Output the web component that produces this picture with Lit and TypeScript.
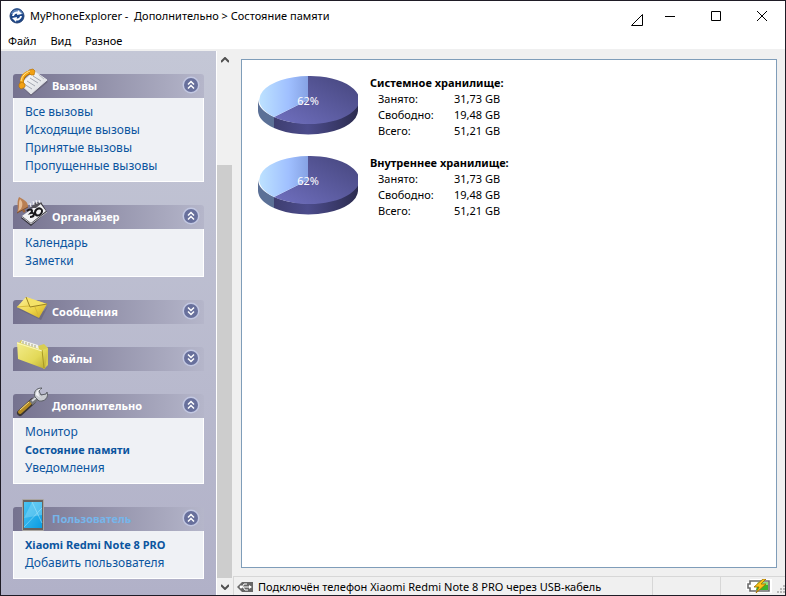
import { LitElement, html, svg, css, nothing, type TemplateResult } from "lit";
import { customElement, property, state } from "lit/decorators.js";
import { classMap } from "lit/directives/class-map.js";

interface Entry {
  label: string;
  active?: boolean;
}

interface Group {
  title: string;
  icon: TemplateResult;
  open: boolean;
  user?: boolean;
  entries: Entry[];
}

interface Storage {
  title: string;
  percent: number;
  rows: [string, string][];
}

const callsIcon = html`<svg width="32" height="32" viewBox="0 0 32 32" aria-hidden="true">
  <defs>
    <linearGradient id="paper" x1="0" y1="0" x2="1" y2="1">
      <stop offset="0" stop-color="#fff" /><stop offset="1" stop-color="#d5d8de" />
    </linearGradient>
  </defs>
  <path d="M5 20 15 30 32 16 20 6Z" fill="#5f5c6c" opacity=".6" />
  <path d="M4 18 18 5 31 14 15 28Z" fill="url(#paper)" stroke="#e4e6ea" stroke-width="1" />
  <path d="M17 10 25 15M14 12 22 17M11 15 19 20M8 18 16 23" stroke="#a4a8b2" stroke-width="1" />
  <path d="M23 9 28 13" stroke="#b9bcc4" stroke-width="1" />
  <path d="M6 19C5 13 8 7 16 6" fill="none" stroke="#b06c05" stroke-width="4" />
  <path d="M6 18C5 12 8 7 16 5" fill="none" stroke="#f6ab1a" stroke-width="3" />
  <path d="M13 4 17 3 19 5 18 9 15 9 13 7ZM3 18 6 16 9 18 9 21 5 23 3 21Z" fill="#f2a114" stroke="#b87208" stroke-width=".7" />
  <path d="M5 15C6 10 9 7 14 5" fill="none" stroke="#ffe39a" stroke-width="1" />
</svg>`;

const organizerIcon = html`<svg width="32" height="32" viewBox="0 0 32 32" aria-hidden="true">
  <path d="M5 21 25 5 31 15 15 29Z" fill="#343239" />
  <path d="M6 19 24 6 30 14 15 26Z" fill="#f2f2f4" />
  <path d="M6 20 15 27 31 15" fill="none" stroke="#c2c2c8" stroke-width="1" />
  <path d="M14 11 20 5 26 6 20 11Z" fill="#55535a" />
  <path d="M15 10l-1-4M18 8l-1-4M21 7l-1-4M24 6l-1-3" stroke="#f4f4f6" stroke-width="1" />
  <path d="M11 14c3-3 7-1 4 2 4-1 4 4-1 4M20 18c-3-4 2-8 5-6s-1 8-5 6z" fill="none" stroke="#18171a" stroke-width="2" />
  <path d="M3 0C8 3 12 4 12 10L1 16C3 11 0 6 3 0Z" fill="#b97f53" />
  <path d="M4 2C7 5 7 8 5 12L2 14C4 9 2 6 4 2Z" fill="#e6bd97" />
  <path d="M1 16 12 10" stroke="#7e4f2e" stroke-width="1" />
  <circle cx="8" cy="14" r="1.5" fill="#9c6339" />
</svg>`;

const messagesIcon = html`<svg width="32" height="32" viewBox="0 0 32 32" aria-hidden="true">
  <defs>
    <linearGradient id="mail" x1="0" y1="0" x2="1" y2="1">
      <stop offset="0" stop-color="#fdf3a0" /><stop offset=".6" stop-color="#ecd244" /><stop offset="1" stop-color="#c9a51e" />
    </linearGradient>
  </defs>
  <path d="M2 17 25 28 32 14 28 19z" fill="#5e5a6c" opacity=".5" />
  <path d="M10 5 31 12 23 26 1 15Z" fill="url(#mail)" />
  <path d="M10 5 14 15 31 12" fill="#f5e267" stroke="#9b8322" stroke-width="1" />
  <path d="M1 15 13 14M23 25 19 15" stroke="#d8bb3a" stroke-width="1" />
</svg>`;

const filesIcon = html`<svg width="32" height="32" viewBox="0 0 32 32" aria-hidden="true">
  <defs>
    <linearGradient id="folder" x1="0" y1="0" x2="1" y2="1">
      <stop offset="0" stop-color="#f3ec8c" /><stop offset=".6" stop-color="#e3d958" /><stop offset="1" stop-color="#b8a92d" />
    </linearGradient>
  </defs>
  <path d="M3 4 5 1 22 7 28 5 32 9V26L28 30Z" fill="#d8cd52" />
  <path d="M5 4 6 1 22 6 23 11Z" fill="#f2f2ec" />
  <path d="M7 2v3M10 3v3M13 4v3M16 5v3M19 6v3" stroke="#a6a67e" stroke-width="1" />
  <path d="M1 3 26 11 32 9 29 30 2 20Z" fill="url(#folder)" />
  <path d="M26 11 28 29" stroke="#a89a26" stroke-width="1" />
  <path d="M1 4 26 12" stroke="#fbf8bd" stroke-width="1" />
</svg>`;

const toolsIcon = html`<svg width="32" height="32" viewBox="0 0 32 32" aria-hidden="true">
  <path d="M4 27 17 15" stroke="#3a3532" stroke-width="6" stroke-linecap="round" />
  <path d="M4 26 14 17" stroke="#b48a22" stroke-width="4" stroke-linecap="round" />
  <path d="M4 24 13 16" stroke="#f4dd83" stroke-width="1" />
  <path d="M15 17 22 11" stroke="#75777c" stroke-width="5" />
  <path d="M16 15 22 10" stroke="#d8dadd" stroke-width="2" />
  <path d="M19 11C17 6 20 2 26 2L23 5 25 9 30 8 31 6C33 11 29 16 23 15Z" fill="#c9ccd1" stroke="#5c5f66" stroke-width="1" />
  <path d="M20 9C20 5 22 3 25 3L22 5 23 10 25 12" fill="#f3f4f6" />
</svg>`;

const userIcon = html`<svg width="32" height="32" viewBox="0 0 32 32" aria-hidden="true">
  <defs>
    <linearGradient id="screen" x1="0" y1="0" x2="1" y2="1">
      <stop offset="0" stop-color="#4cc4f2" /><stop offset="1" stop-color="#0a9ce2" />
    </linearGradient>
  </defs>
  <rect x="6" y="0" width="22" height="32" rx="1" fill="#aaa6a2" />
  <rect x="7" y="1" width="20" height="30" fill="#67625f" />
  <rect x="8" y="3" width="18" height="26" fill="url(#screen)" />
  <path d="M16 3h10v13L8 19Z" fill="#8fdcf8" opacity=".45" />
  <path d="M16 3 26 24M8 28 26 9" stroke="#b5ecfc" stroke-width="1" opacity=".5" />
</svg>`;

const logo = html`<svg class="logo" width="16" height="16" viewBox="0 0 16 16" aria-hidden="true">
  <circle cx="8" cy="8" r="7" fill="#1c4689" />
  <path d="M2 6a6 6 0 0 1 12 0z" fill="#5d84bd" />
  <circle cx="8" cy="8" r="7" fill="none" stroke="#254273" stroke-width="1" />
  <path d="M4 8a4 4 0 0 1 6-3" fill="none" stroke="#fff" stroke-width="2" />
  <path d="M9 2l4 4-5 1z" fill="#fff" />
  <path d="M12 8a4 4 0 0 1-6 3" fill="none" stroke="#fff" stroke-width="2" />
  <path d="M7 14l-4-4 5-1z" fill="#fff" />
</svg>`;

const plugIcon = html`<svg width="16" height="10" viewBox="0 0 16 10" aria-hidden="true">
  <path d="M5 0H16V10H5L0 5Z" fill="#666" />
  <path d="M3 5H14M5 5 7 2H10M6 5 8 8H11" fill="none" stroke="#fff" stroke-width="1" />
  <path d="M12 3l3 2-3 2z" fill="#fff" /><circle cx="4" cy="5" r="1.4" fill="#fff" />
</svg>`;

const batteryIcon = html`<svg width="26" height="14" viewBox="0 0 26 14" aria-hidden="true">
  <path d="M4 0H26V14H4V11H0V3H4Z" fill="#fff" />
  <path d="M4 2H23V12H4V9H2V5H4Z" fill="#fff" stroke="#6b6b6b" stroke-width="1.6" />
  <path d="M12 3H22V11H10Z" fill="#39b52c" />
  <path d="M12 3H22V6H11Z" fill="#8fe07c" />
  <path d="M17 0 8 8h5l-3 6 10-9h-5l5-5z" fill="#fcc419" stroke="#9a6b00" stroke-width=".8" />
</svg>`;

const gripIcon = html`<svg width="8" height="8" viewBox="0 0 8 8" aria-hidden="true">
  <path d="M6 0h2v2H6zM3 3h2v2H3zM6 3h2v2H6zM0 6h2v2H0zM3 6h2v2H3zM6 6h2v2H6z" fill="#b8b8b8" />
</svg>`;

@customElement("side-group")
class SideGroup extends LitElement {
  @property({ attribute: false }) group!: Group;
  @state() private open = false;

  static styles = css`
    :host { display: block; }
    .head {
      display: flex; align-items: center; width: 100%; height: 24px;
      padding: 0 4px 0 3px; border: 0; border-radius: 3px 3px 0 0;
      background: linear-gradient(90deg, #75728f, #b5b6ca);
      font: bold 11px/24px "Noto Sans", "Open Sans", sans-serif;
      color: #fff; text-align: left;
    }
    .icon { display: flex; height: 32px; margin: -8px 4px 0 0; }
    .title { flex: 1; white-space: nowrap; }
    .user .title { color: #76b5ea; }
    .chevron { margin-bottom: 2px; }
    .list {
      margin: 0; padding: 5px 11px 6px; list-style: none;
      border: 1px solid #fff; border-top: 0; background: #eff1f5;
      font: 12px/18px "Noto Sans", "Open Sans", sans-serif;
    }
    .list a { display: block; color: #0b559f; text-decoration: none; white-space: nowrap; }
    .list .active { font-size: 11px; font-weight: bold; }
  `;

  willUpdate(changed: Map<string, unknown>) {
    if (changed.has("group")) this.open = this.group.open;
  }

  render() {
    const g = this.group;
    return html`
      <button
        class=${classMap({ head: true, user: !!g.user })}
        aria-expanded=${this.open}
        @click=${() => (this.open = !this.open)}
      >
        <span class="icon">${g.icon}</span>
        <span class="title">${g.title}</span>
        <svg class="chevron" width="18" height="18" viewBox="0 0 18 18" aria-hidden="true">
          <circle cx="9" cy="9" r="8.5" fill="#c3c8e2" />
          <circle cx="9" cy="9" r="7" fill="#68709c" />
          <path
            d=${this.open ? "M6 8.5l3-3 3 3M6 12.5l3-3 3 3" : "M6 5.5l3 3 3-3M6 9.5l3 3 3-3"}
            fill="none" stroke="#fff" stroke-width="1.5"
          />
        </svg>
      </button>
      ${this.open
        ? html`<ul class="list">
            ${g.entries.map(
              (e) => html`<li><a href="#" class=${classMap({ active: !!e.active })}>${e.label}</a></li>`
            )}
          </ul>`
        : nothing}
    `;
  }
}

@customElement("storage-card")
class StorageCard extends LitElement {
  @property({ attribute: false }) storage!: Storage;

  static styles = css`
    :host { display: flex; align-items: flex-start; gap: 12px; }
    .pie { flex: none; margin-top: 1px; }
    .pct { font: 11px "Noto Sans", "Open Sans", sans-serif; fill: #fff; text-anchor: middle; }
    table { border-collapse: collapse; font: 11px/16px "Noto Sans", "Open Sans", sans-serif; color: #000; }
    caption { text-align: left; font-weight: bold; white-space: nowrap; }
    th { width: 76px; padding: 0 0 0 8px; text-align: left; font-weight: normal; }
    td { padding: 0; white-space: nowrap; }
  `;

  private pie(percent: number) {
    const cx = 50, cy = 24, rx = 50, ry = 24, depth = 11;
    const a = (percent / 100) * 2 * Math.PI;
    const x = Math.round(cx + rx * Math.sin(a));
    const y = Math.round(cy - ry * Math.cos(a));
    return svg`
      <defs>
        <linearGradient id="used" x1="0" y1="1" x2="1" y2="0">
          <stop offset="0" stop-color="#7070c0" /><stop offset="1" stop-color="#45457c" />
        </linearGradient>
        <linearGradient id="free" x1="0" y1="0" x2="1" y2="0">
          <stop offset="0" stop-color="#bde2ff" /><stop offset=".6" stop-color="#a0c0ff" /><stop offset="1" stop-color="#86a2e4" />
        </linearGradient>
        <linearGradient id="usedSide" x1="0" y1="0" x2="1" y2="0">
          <stop offset="0" stop-color="#3e3e70" /><stop offset=".4" stop-color="#4c4c8c" /><stop offset="1" stop-color="#2c2c50" />
        </linearGradient>
      </defs>
      <path d="M${x} ${y}A${rx} ${ry} 0 0 0 100 ${cy}V${cy + depth}A${rx} ${ry} 0 0 1 ${x} ${y + depth}Z" fill="url(#usedSide)" />
      <path d="M0 ${cy}A${rx} ${ry} 0 0 0 ${x} ${y}V${y + depth}A${rx} ${ry} 0 0 1 0 ${cy + depth}Z" fill="#5b7096" />
      <path d="M${cx} ${cy}V0A${rx} ${ry} 0 1 1 ${x} ${y}Z" fill="url(#used)" />
      <path d="M${cx} ${cy}V0A${rx} ${ry} 0 0 0 ${x} ${y}Z" fill="url(#free)" />
      <text class="pct" x="50" y="29">${percent}%</text>
    `;
  }

  render() {
    const s = this.storage;
    return html`
      <svg class="pie" width="100" height="60" viewBox="0 0 100 60" role="img" aria-label=${s.title}>
        ${this.pie(s.percent)}
      </svg>
      <table>
        <caption>${s.title}</caption>
        <tbody>
          ${s.rows.map(([k, v]) => html`<tr><th scope="row">${k}</th><td>${v}</td></tr>`)}
        </tbody>
      </table>
    `;
  }
}

@customElement("app-root")
class AppRoot extends LitElement {
  private groups: Group[] = [
    {
      title: "Вызовы", icon: callsIcon, open: true,
      entries: [
        { label: "Все вызовы" }, { label: "Исходящие вызовы" },
        { label: "Принятые вызовы" }, { label: "Пропущенные вызовы" },
      ],
    },
    { title: "Органайзер", icon: organizerIcon, open: true, entries: [{ label: "Календарь" }, { label: "Заметки" }] },
    { title: "Сообщения", icon: messagesIcon, open: false, entries: [] },
    { title: "Файлы", icon: filesIcon, open: false, entries: [] },
    {
      title: "Дополнительно", icon: toolsIcon, open: true,
      entries: [{ label: "Монитор" }, { label: "Состояние памяти", active: true }, { label: "Уведомления" }],
    },
    {
      title: "Пользователь", icon: userIcon, open: true, user: true,
      entries: [{ label: "Xiaomi Redmi Note 8 PRO", active: true }, { label: "Добавить пользователя" }],
    },
  ];

  private storages: Storage[] = ["Системное хранилище:", "Внутреннее хранилище:"].map((title) => ({
    title,
    percent: 62,
    rows: [["Занято:", "31,73 GB"], ["Свободно:", "19,48 GB"], ["Всего:", "51,21 GB"]],
  }));

  static styles = css`
    :host {
      display: flex; flex-direction: column; box-sizing: border-box; height: 100vh;
      border: 1px solid #1f1c26; background: #f0f0f0; color: #000;
      font: 11px/16px "Noto Sans", "Open Sans", sans-serif;
    }
    button { margin: 0; border: 0; padding: 0; background: none; color: inherit; font: inherit; }
    .titlebar { display: flex; align-items: center; height: 30px; padding-left: 8px; background: #fff; }
    .logo { margin-right: 5px; }
    .caption { flex: 1; white-space: pre; overflow: hidden; }
    .win { display: flex; align-items: center; justify-content: center; width: 46px; height: 30px; }
    .resize { width: 20px; padding-top: 8px; }
    .menu { display: flex; gap: 14px; height: 18px; padding: 0 7px; background: #fff; }
    .menu button { line-height: 20px; }
    .content { display: flex; flex: 1; min-height: 0; }
    .side {
      display: flex; flex-direction: column; gap: 23px; box-sizing: border-box;
      width: 216px; margin-top: 2px; padding: 23px 12px 0; overflow: hidden;
      border-right: 1px solid #fff; background: linear-gradient(#c4c7d6, #b1b1c8);
    }
    .scroll { display: flex; flex-direction: column; width: 16px; padding-top: 2px; }
    .arrow { display: flex; align-items: center; justify-content: center; height: 17px; }
    .track { flex: 1; display: flex; flex-direction: column; justify-content: flex-end; }
    .thumb { width: 15px; height: 81%; background: #cdcdcd; }
    .right { display: flex; flex: 1; flex-direction: column; min-width: 0; }
    .main {
      display: flex; flex: 1; flex-direction: column; gap: 16px; min-height: 0;
      margin: 10px 8px 8px; padding: 15px 16px; border: 1px solid #7f9db9; background: #fff;
    }
    .status { display: flex; height: 18px; border-top: 1px solid #d7d7d7; white-space: nowrap; }
    .cell { display: flex; align-items: center; padding-left: 3px; border-left: 1px solid #d7d7d7; }
    .wide { flex: 1; gap: 5px; padding-top: 2px; }
    .slot { width: 64px; }
    .power { width: 61px; justify-content: flex-end; gap: 5px; }
    .grip { display: flex; align-self: flex-end; padding-bottom: 2px; }
  `;

  render() {
    return html`
      <header class="titlebar">
        ${logo}
        <span class="caption">MyPhoneExplorer -  Дополнительно > Состояние памяти</span>
        <button class="win resize" aria-label="Свернуть в трей">
          <svg width="12" height="12" viewBox="0 0 12 12"><path d="M11.5.5v11H.5z" fill="none" stroke="#000" /></svg>
        </button>
        <button class="win" aria-label="Свернуть">
          <svg width="10" height="10" viewBox="0 0 10 10"><path d="M0 5.5h10" stroke="#000" /></svg>
        </button>
        <button class="win" aria-label="Развернуть">
          <svg width="10" height="10" viewBox="0 0 10 10"><path d="M.5.5h9v9h-9z" fill="none" stroke="#000" /></svg>
        </button>
        <button class="win" aria-label="Закрыть">
          <svg width="10" height="10" viewBox="0 0 10 10"><path d="M0 0l10 10M10 0 0 10" stroke="#000" /></svg>
        </button>
      </header>
      <nav class="menu">
        <button>Файл</button><button>Вид</button><button>Разное</button>
      </nav>
      <div class="content">
        <aside class="side">${this.groups.map((g) => html`<side-group .group=${g}></side-group>`)}</aside>
        <div class="scroll">
          <button class="arrow" aria-label="Вверх">
            <svg width="8" height="6" viewBox="0 0 8 6"><path d="M0 5l4-4 4 4" fill="none" stroke="#505050" stroke-width="2" /></svg>
          </button>
          <div class="track"><div class="thumb"></div></div>
          <button class="arrow" aria-label="Вниз">
            <svg width="8" height="6" viewBox="0 0 8 6"><path d="M0 1l4 4 4-4" fill="none" stroke="#505050" stroke-width="2" /></svg>
          </button>
        </div>
        <div class="right">
          <main class="main">${this.storages.map((s) => html`<storage-card .storage=${s}></storage-card>`)}</main>
          <footer class="status">
            <div class="cell wide">${plugIcon}<span>Подключён телефон Xiaomi Redmi Note 8 PRO через USB-кабель</span></div>
            <div class="cell slot"></div>
            <div class="cell power">${batteryIcon}<span class="grip">${gripIcon}</span></div>
          </footer>
        </div>
      </div>
    `;
  }
}
